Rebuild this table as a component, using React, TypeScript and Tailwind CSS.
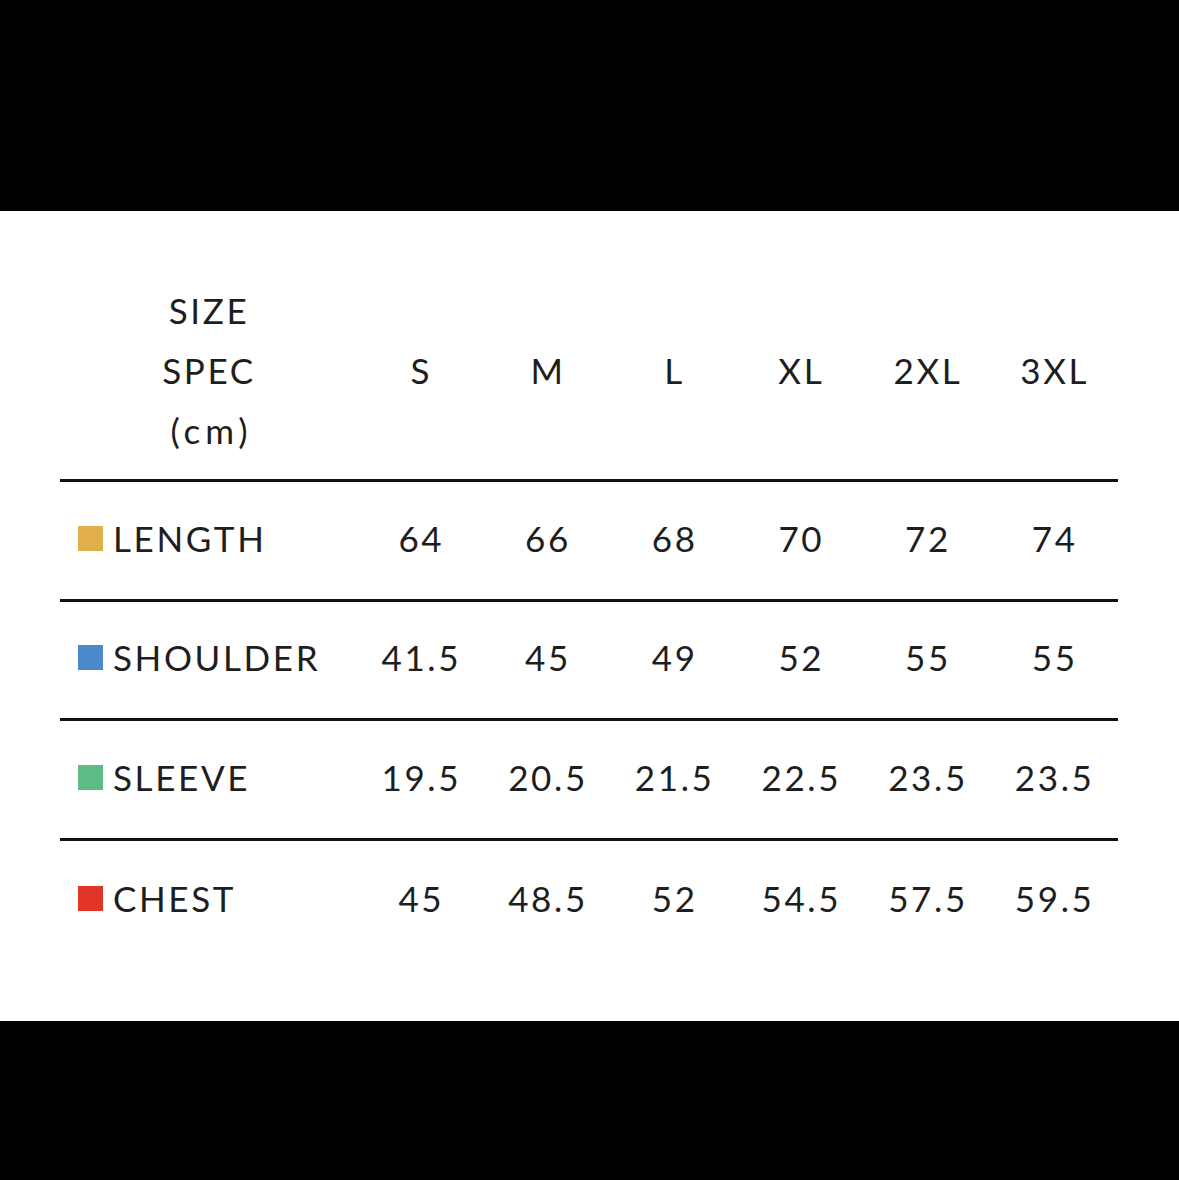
const SIZES = ['S', 'M', 'L', 'XL', '2XL', '3XL'];

const ROWS = [
  { label: 'LENGTH', color: 'bg-[#e1b04a]', values: ['64', '66', '68', '70', '72', '74'] },
  { label: 'SHOULDER', color: 'bg-[#4a89cb]', values: ['41.5', '45', '49', '52', '55', '55'] },
  { label: 'SLEEVE', color: 'bg-[#5dbb84]', values: ['19.5', '20.5', '21.5', '22.5', '23.5', '23.5'] },
  { label: 'CHEST', color: 'bg-[#e2352a]', values: ['45', '48.5', '52', '54.5', '57.5', '59.5'] },
];

export default function App() {
  return (
    <div className="flex h-[1180px] w-full flex-col bg-black font-['Lato',sans-serif] font-normal text-[#1e1e1e]">
      <div className="h-[211px] shrink-0 bg-black" />
      <div className="h-[810px] shrink-0 bg-white px-[60px] pr-[61px]">
        <div className="grid grid-cols-[298px_repeat(6,1fr)] border-b-[3.5px] border-[#111] pt-[69px] pb-[19px] text-[35px] leading-[60px] tracking-[0.075em]">
          <div className="flex flex-col items-center">
            <span>SIZE</span>
            <span>SPEC</span>
            <span className="pl-[0.14em] tracking-[0.14em]">(cm)</span>
          </div>
          {SIZES.map((s) => (
            <div key={s} className="flex items-center justify-center">{s}</div>
          ))}
        </div>
        {ROWS.map((row, i) => (
          <div
            key={row.label}
            className={`grid h-[119.5px] grid-cols-[298px_repeat(6,1fr)] items-center pb-[5px] text-[35px] tracking-[0.075em] ${i < ROWS.length - 1 ? 'border-b-[3.5px] border-[#111]' : ''}`}
          >
            <div className="flex items-center gap-[10px] pl-[18px]">
              <span className={`mt-[1px] h-[25px] w-[25px] shrink-0 ${row.color}`} />
              <span>{row.label}</span>
            </div>
            {row.values.map((v, j) => (
              <div key={j} className="text-center">{v}</div>
            ))}
          </div>
        ))}
      </div>
      <div className="flex-1 bg-black" />
    </div>
  );
}
